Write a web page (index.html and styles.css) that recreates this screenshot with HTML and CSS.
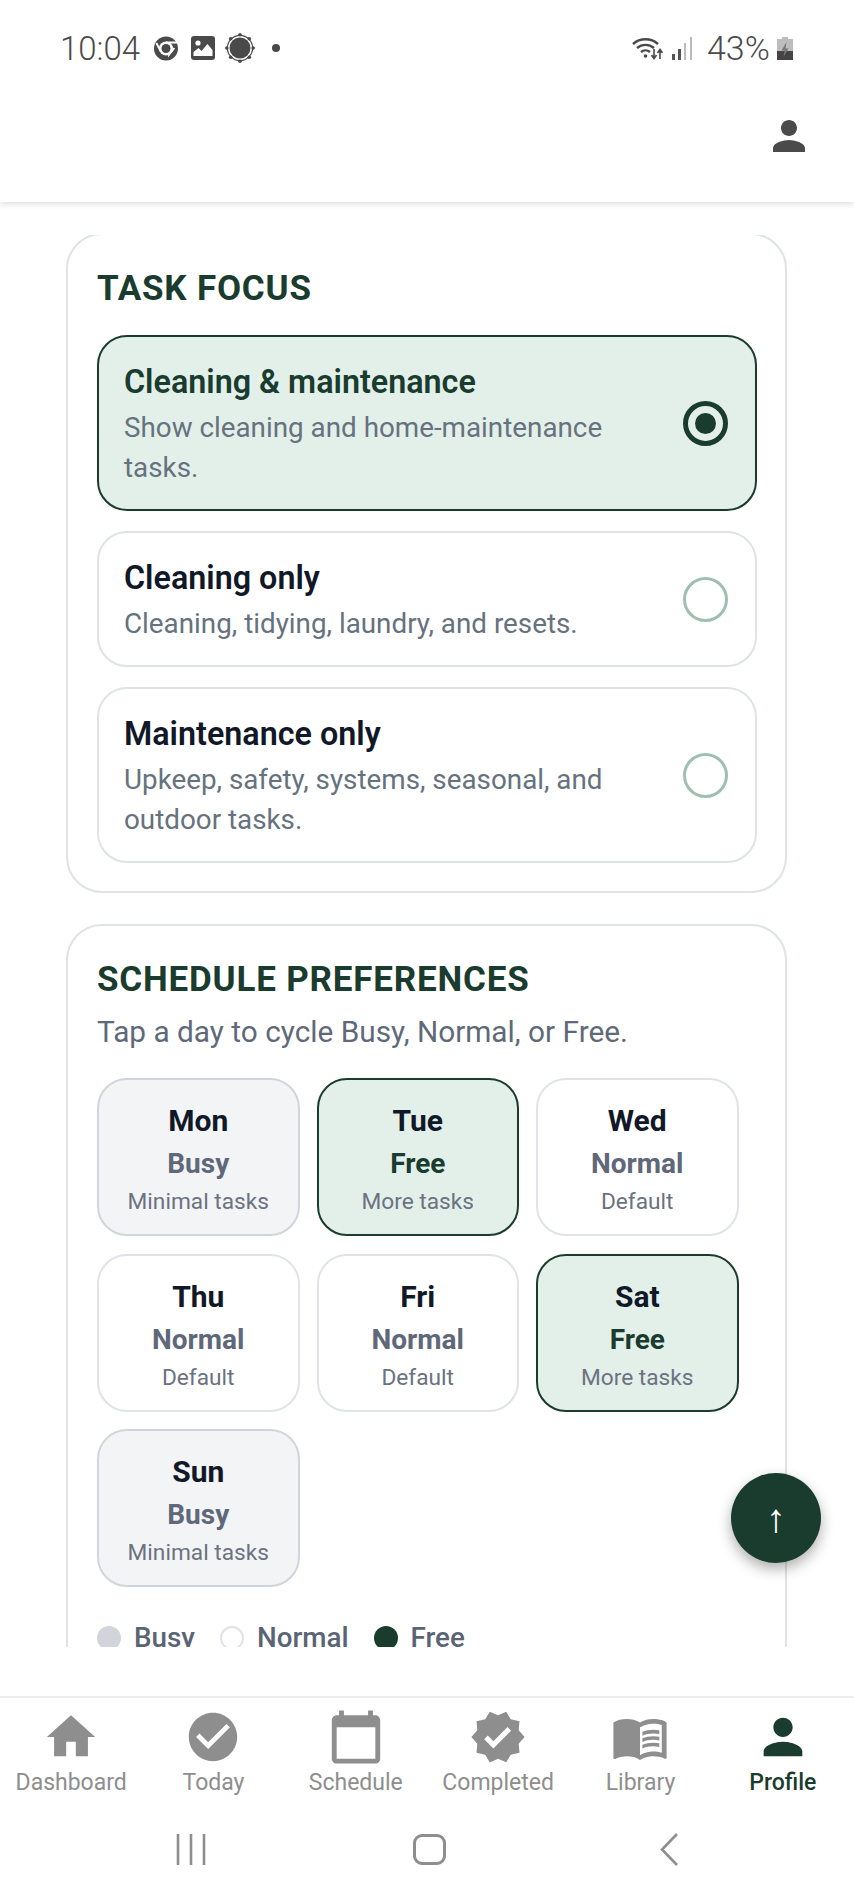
FILE: index.html
```html
<!DOCTYPE html>
<html lang="en">
<head>
    <meta charset="UTF-8">
    <meta name="viewport" content="width=device-width, initial-scale=1.0">
    <title>Profile</title>
    <link rel="stylesheet" href="styles.css">
</head>
<body>
    <header class="app-header">
        <div class="status-bar">
            <div class="status-left">
                <span class="clock">10:04</span>
                <svg class="st-chrome" viewBox="0 0 24 24"><circle cx="12" cy="12" r="12" fill="#4a4a4a"/><circle cx="12" cy="12" r="7" fill="#fff"/><circle cx="12" cy="12" r="4.5" fill="#4a4a4a"/><path d="M12 5h11v2H12zM6 15.5L1.5 7l1.7-1 4.5 8.5zM14 19l5.5-8 1.6 1-7 9z" fill="#fff"/></svg>
                <svg class="st-image" viewBox="0 0 24 24"><rect x="0" y="0" width="24" height="24" rx="3" fill="#4a4a4a"/><circle cx="7" cy="7" r="2.6" fill="#fff"/><path d="M2.5 20v-4l5-4 3 3 6-7 5 6v6z" fill="#fff"/></svg>
                <svg class="st-sun" viewBox="0 0 30 30"><g fill="#4a4a4a"><circle cx="15" cy="15" r="10.5"/><circle cx="15" cy="1.8" r="1.8"/><circle cx="15" cy="28.2" r="1.8"/><circle cx="1.8" cy="15" r="1.8"/><circle cx="28.2" cy="15" r="1.8"/><circle cx="5.7" cy="5.7" r="1.8"/><circle cx="24.3" cy="5.7" r="1.8"/><circle cx="5.7" cy="24.3" r="1.8"/><circle cx="24.3" cy="24.3" r="1.8"/></g><circle cx="15" cy="15" r="12.6" fill="none" stroke="#4a4a4a" stroke-width="1.2"/></svg>
                <span class="st-dot"></span>
            </div>
            <div class="status-right">
                <svg class="st-wifi" viewBox="0 0 32 24"><path d="M1 8a19 19 0 0 1 25 0M5 12a13 13 0 0 1 17 0M9 16a7 7 0 0 1 9 0" fill="none" stroke="#4a4a4a" stroke-width="2.4"/><circle cx="13.5" cy="20" r="1.8" fill="#4a4a4a"/><path d="M22 13v9M19.5 19l2.5 3.5 2.5-3.5M28 23v-9M25.5 17l2.5-3.5 2.5 3.5" fill="none" stroke="#4a4a4a" stroke-width="1.6"/></svg>
                <svg class="st-signal" viewBox="0 0 21 23"><rect x="0" y="17" width="3" height="6" fill="#555"/><rect x="6" y="12" width="3" height="11" fill="#555"/><rect x="12" y="6" width="2" height="17" fill="#bbb"/><rect x="18" y="0" width="2" height="23" fill="#bbb"/></svg>
                <span class="battery-text">43%</span>
                <svg class="st-battery" viewBox="0 0 16 23"><path d="M5 0h6v2h5v21H0V2h5z" fill="#bdbdbd"/><path d="M0 14h16v9H0z" fill="#444"/><path d="M9.5 5l-5 8.5h3L6.5 20l5-8.5h-3z" fill="#777"/></svg>
            </div>
        </div>
        <div class="top-bar">
            <svg class="icon top-person" viewBox="0 0 24 24"><path d="M12 12c2.21 0 4-1.79 4-4s-1.79-4-4-4-4 1.79-4 4 1.79 4 4 4zm0 2c-2.67 0-8 1.34-8 4v2h16v-2c0-2.66-5.33-4-8-4z"/></svg>
        </div>
    </header>

    <main class="content">
        <section class="card">
            <h2 class="card-title">TASK FOCUS</h2>
            <div class="option-list">
                <div class="option selected">
                    <div class="option-text">
                        <div class="option-name">Cleaning &amp; maintenance</div>
                        <div class="option-desc">Show cleaning and home-maintenance tasks.</div>
                    </div>
                    <span class="radio on"></span>
                </div>
                <div class="option">
                    <div class="option-text">
                        <div class="option-name">Cleaning only</div>
                        <div class="option-desc">Cleaning, tidying, laundry, and resets.</div>
                    </div>
                    <span class="radio"></span>
                </div>
                <div class="option">
                    <div class="option-text">
                        <div class="option-name">Maintenance only</div>
                        <div class="option-desc">Upkeep, safety, systems, seasonal, and outdoor tasks.</div>
                    </div>
                    <span class="radio"></span>
                </div>
            </div>
        </section>

        <section class="card">
            <h2 class="card-title">SCHEDULE PREFERENCES</h2>
            <p class="card-sub">Tap a day to cycle Busy, Normal, or Free.</p>
            <div class="day-grid">
                <div class="day busy"><div class="day-name">Mon</div><div class="day-state">Busy</div><div class="day-note">Minimal tasks</div></div>
                <div class="day free"><div class="day-name">Tue</div><div class="day-state">Free</div><div class="day-note">More tasks</div></div>
                <div class="day"><div class="day-name">Wed</div><div class="day-state">Normal</div><div class="day-note">Default</div></div>
                <div class="day"><div class="day-name">Thu</div><div class="day-state">Normal</div><div class="day-note">Default</div></div>
                <div class="day"><div class="day-name">Fri</div><div class="day-state">Normal</div><div class="day-note">Default</div></div>
                <div class="day free"><div class="day-name">Sat</div><div class="day-state">Free</div><div class="day-note">More tasks</div></div>
                <div class="day busy"><div class="day-name">Sun</div><div class="day-state">Busy</div><div class="day-note">Minimal tasks</div></div>
            </div>
            <div class="legend">
                <span class="legend-item"><i class="swatch s-busy"></i>Busy</span>
                <span class="legend-item"><i class="swatch s-normal"></i>Normal</span>
                <span class="legend-item"><i class="swatch s-free"></i>Free</span>
            </div>
        </section>
    </main>

    <button class="fab" type="button">↑</button>

    <nav class="bottom-nav">
        <div class="tabs">
            <div class="tab">
                <svg class="icon" viewBox="0 0 24 24"><path d="M10 20v-6h4v6h5v-8h3L12 3 2 12h3v8z"/></svg>
                <span>Dashboard</span>
            </div>
            <div class="tab">
                <svg class="icon" viewBox="0 0 24 24"><path d="M12 2C6.48 2 2 6.48 2 12s4.48 10 10 10 10-4.48 10-10S17.52 2 12 2zm-2 15l-5-5 1.41-1.41L10 14.17l7.59-7.59L19 8l-9 9z"/></svg>
                <span>Today</span>
            </div>
            <div class="tab">
                <svg class="icon" viewBox="0 0 24 24"><path d="M20 3h-1V1h-2v2H7V1H5v2H4c-1.1 0-2 .9-2 2v16c0 1.1.9 2 2 2h16c1.1 0 2-.9 2-2V5c0-1.1-.9-2-2-2zm0 18H4V8h16v13z"/></svg>
                <span>Schedule</span>
            </div>
            <div class="tab">
                <svg class="icon" viewBox="0 0 24 24"><path d="M23 12l-2.44-2.79.34-3.69-3.61-.82-1.89-3.2L12 2.96 8.6 1.5 6.71 4.69 3.1 5.5l.34 3.7L1 12l2.44 2.79-.34 3.7 3.61.82L8.6 22.5l3.4-1.47 3.4 1.46 1.89-3.19 3.61-.82-.34-3.69L23 12zm-12.91 4.72l-3.8-3.81 1.48-1.48 2.32 2.33 5.85-5.87 1.48 1.48-7.33 7.35z"/></svg>
                <span>Completed</span>
            </div>
            <div class="tab">
                <svg class="icon" viewBox="0 0 24 24"><path d="M21 5c-1.11-.35-2.33-.5-3.5-.5-1.95 0-4.05.4-5.5 1.5-1.45-1.1-3.55-1.5-5.5-1.5S2.45 4.9 1 6v14.65c0 .25.25.5.5.5.1 0 .15-.05.25-.05C3.1 20.45 5.05 20 6.5 20c1.95 0 4.05.4 5.5 1.5 1.35-.85 3.8-1.5 5.5-1.5 1.65 0 3.35.3 4.75 1.05.1.05.15.05.25.05.25 0 .5-.25.5-.5V6c-.6-.45-1.25-.75-2-1zm0 13.5c-1.1-.35-2.3-.5-3.5-.5-1.7 0-4.15.65-5.5 1.5V8c1.35-.85 3.8-1.5 5.5-1.5 1.2 0 2.4.15 3.5.5v11.5z"/><path d="M17.5 10.5c.88 0 1.73.09 2.5.26V9.24c-.79-.15-1.64-.24-2.5-.24-1.7 0-3.24.29-4.5.83v1.66c1.13-.64 2.7-.99 4.5-.99zM13 12.49v1.66c1.13-.64 2.7-.99 4.5-.99.88 0 1.73.09 2.5.26V11.9c-.79-.15-1.64-.24-2.5-.24-1.7 0-3.24.3-4.5.83zm4.5 1.84c-1.7 0-3.24.29-4.5.83v1.66c1.13-.64 2.7-.99 4.5-.99.88 0 1.73.09 2.5.26v-1.52c-.79-.16-1.64-.24-2.5-.24z"/></svg>
                <span>Library</span>
            </div>
            <div class="tab active">
                <svg class="icon" viewBox="0 0 24 24"><path d="M12 12c2.21 0 4-1.79 4-4s-1.79-4-4-4-4 1.79-4 4 1.79 4 4 4zm0 2c-2.67 0-8 1.34-8 4v2h16v-2c0-2.66-5.33-4-8-4z"/></svg>
                <span>Profile</span>
            </div>
        </div>
        <div class="system-bar">
            <svg class="sys-recent" viewBox="0 0 30 31"><path d="M2 0v31M15 0v31M28 0v31" fill="none" stroke="#8e8e8e" stroke-width="2.6"/></svg>
            <span class="sys-home"></span>
            <svg class="sys-back" viewBox="0 0 18 33"><path d="M17 1L2 16.5 17 32" fill="none" stroke="#8e8e8e" stroke-width="2.6"/></svg>
        </div>
    </nav>
</body>
</html>
```

FILE: styles.css
```css
* { box-sizing: border-box; }
html, body { margin: 0; padding: 0; }
body { position: relative; width: 854px; height: 1898px; overflow: hidden; background-color: #ffffff; font-family: Roboto, "Noto Sans", sans-serif; color: #111827; }

.app-header { height: 202px; background-color: #ffffff; box-shadow: 0 2px 6px rgba(0, 0, 0, 0.14); }
.status-bar { display: flex; justify-content: space-between; align-items: center; height: 96px; padding: 0 61px 0 60px; color: #4a4a4a; }
.status-left, .status-right { display: flex; align-items: center; }
.clock { font-size: 33px; font-weight: 300; width: 94px; }
.st-chrome { width: 24px; height: 25px; }
.st-image { width: 24px; height: 24px; margin-left: 13px; }
.st-sun { width: 30px; height: 30px; margin-left: 10px; }
.st-dot { width: 8px; height: 8px; margin-left: 17px; border-radius: 50%; background-color: #4a4a4a; }
.st-wifi { width: 32px; height: 24px; }
.st-signal { width: 21px; height: 23px; margin-left: 8px; }
.battery-text { font-size: 34px; font-weight: 300; margin-left: 14px; width: 70px; }
.st-battery { width: 16px; height: 23px; }

.top-bar { display: flex; justify-content: flex-end; padding: 16px 41px 0 0; }
.icon { display: block; width: 58px; height: 58px; fill: currentColor; }
.top-person { width: 48px; height: 48px; color: #4a4a4a; }

.content { display: flex; flex-direction: column; gap: 31px; height: 1412px; margin-top: 33px; padding: 0 67px 0 66px; overflow: hidden; }
.card { flex-shrink: 0; margin-top: -2px; padding: 34px 28px 28px 29px; border: 2px solid #dfe4e3; border-radius: 36px; background-color: #ffffff; }
.card + .card { margin-top: 0; padding-top: 34px; padding-bottom: 40px; }
.card-title { margin: 0; font-size: 35px; line-height: 40px; font-weight: 700; letter-spacing: 0.8px; color: #1a3c2e; }
.card-sub { margin: 12px 0 0; font-size: 29.8px; line-height: 40px; color: #5f6a78; }

.option-list { display: flex; flex-direction: column; gap: 20px; margin-top: 26px; }
.option { display: flex; align-items: center; justify-content: space-between; padding: 22px 27px 21px 25px; border: 2px solid #dfe3e6; border-radius: 30px; background-color: #ffffff; }
.option.selected { border-color: #1a3c2e; background-color: #e3f0ea; }
.option-text { width: 490px; }
.option-name { margin-bottom: 3px; font-size: 32.3px; line-height: 46px; font-weight: 600; color: #111827; }
.selected .option-name { color: #1a3c2e; }
.option-desc { font-size: 27.8px; line-height: 40px; color: #66727e; }
.radio { flex-shrink: 0; width: 45px; height: 45px; border: 3px solid #9fc0b1; border-radius: 50%; }
.radio.on { display: flex; align-items: center; justify-content: center; border: 5px solid #1a3c2e; }
.radio.on::after { content: ""; width: 21px; height: 21px; border-radius: 50%; background-color: #1a3c2e; }

.day-grid { display: grid; grid-template-columns: repeat(3, 202.5px); grid-auto-rows: 158px; gap: 17.5px 17px; margin-top: 26px; }
.day { padding: 21px 0; border: 2px solid #e0e3e7; border-radius: 30px; text-align: center; background-color: #ffffff; }
.day.busy { border-color: #d1d5db; background-color: #f3f4f6; }
.day.free { border-color: #1a3c2e; background-color: #e3f0ea; }
.day-name { font-size: 30px; line-height: 40px; font-weight: 700; color: #111827; }
.day-state { margin-top: 2px; font-size: 28px; line-height: 42px; font-weight: 700; color: #5f6879; }
.free .day-state { color: #1a3c2e; }
.day-note { margin-top: 1px; font-size: 22.7px; line-height: 32px; color: #6b7280; }

.legend { display: flex; gap: 25px; margin-top: 31px; }
.legend-item { display: flex; align-items: center; gap: 13px; font-size: 27.8px; line-height: 40px; font-weight: 500; color: #5b6475; }
.swatch { width: 24px; height: 24px; border-radius: 50%; }
.s-busy { background-color: #d1d5db; }
.s-normal { border: 2px solid #e0e3e7; background-color: #ffffff; }
.s-free { background-color: #1a3c2e; }

.fab { position: absolute; left: 731px; top: 1473px; width: 90px; height: 90px; padding: 0; border: none; border-radius: 50%; font-family: Roboto, sans-serif; font-size: 40px; font-weight: 700; color: #ffffff; background-color: #1a3c2e; box-shadow: 0 6px 14px rgba(0, 0, 0, 0.32); }

.bottom-nav { margin-top: 49px; border-top: 2px solid #eeeeee; background-color: #ffffff; }
.tabs { display: grid; grid-template-columns: repeat(6, 1fr); padding-top: 10px; }
.tab { display: flex; flex-direction: column; align-items: center; font-size: 23px; line-height: 30px; color: #8e8e8e; }
.tab span { margin-top: 2px; }
.tab.active { font-weight: 500; color: #1a3c2e; }
.system-bar { display: grid; grid-template-columns: repeat(3, 239px); justify-content: center; justify-items: center; align-items: center; margin-top: 35px; padding-left: 5px; }
.sys-recent { width: 30px; height: 31px; }
.sys-home { width: 33px; height: 31px; border: 3px solid #8e8e8e; border-radius: 9px; }
.sys-back { width: 18px; height: 33px; }
```
